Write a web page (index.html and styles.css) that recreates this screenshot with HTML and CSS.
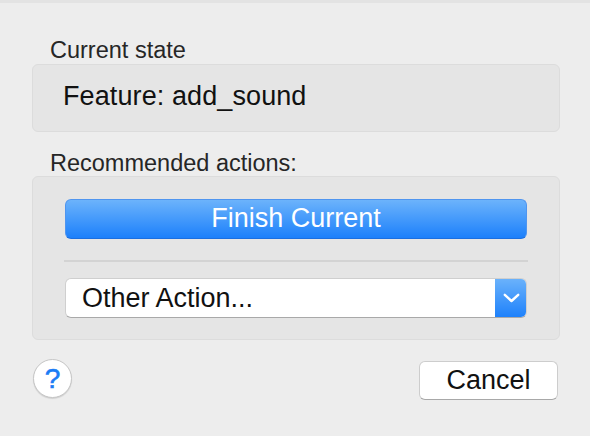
FILE: index.html
```html
<!DOCTYPE html>
<html>
<head>
<meta charset="utf-8">
<link rel="stylesheet" href="styles.css">
</head>
<body>
<div class="dialog">
  <div class="label label-first">Current state</div>
  <div class="group state">
    <div class="state-text">Feature: add_sound</div>
  </div>
  <div class="label">Recommended actions:</div>
  <div class="group actions">
    <div class="primary">Finish Current</div>
    <div class="separator"></div>
    <div class="popup">
      <div class="popup-text">Other Action...</div>
      <div class="popup-arrow">
        <svg width="17" height="10" viewBox="0 0 17 10"><path d="M1.8 1.8 L8.5 8 L15.2 1.8" fill="none" stroke="#fff" stroke-width="2.4" stroke-linecap="round" stroke-linejoin="round"/></svg>
      </div>
    </div>
  </div>
  <div class="footer">
    <div class="help">?</div>
    <div class="cancel">Cancel</div>
  </div>
</div>
</body>
</html>
```

FILE: styles.css
```css
html, body {
  margin: 0;
  padding: 0;
}
body {
  background: #ededed;
  width: 590px;
  height: 436px;
  overflow: hidden;
  font-family: "Liberation Sans", Arial, sans-serif;
  border-top: 3px solid #e3e3e3;
  box-sizing: border-box;
}
.dialog {
  padding: 0 30px 0 32px;
}
.label {
  font-size: 23.5px;
  line-height: 26px;
  color: #262626;
  padding-left: 18px;
  margin-top: 18px;
}
.label-first {
  margin-top: 34px;
  margin-bottom: 1px;
}
.group {
  background: #e5e5e5;
  border: 1px solid #dcdcdc;
  border-radius: 6px;
}
.state {
  padding: 15px 30px 0;
  box-sizing: border-box;
  height: 68px;
}
.state-text {
  font-size: 27px;
  line-height: 32px;
  color: #111;
  letter-spacing: 0.1px;
}
.actions {
  padding: 22px 32px 21px;
  height: 164px;
  box-sizing: border-box;
}
.primary {
  height: 40px;
  box-sizing: border-box;
  border-radius: 6px;
  border: 1px solid #4f95ef;
  border-bottom-color: #1b6fe0;
  background: linear-gradient(#6cb3fb, #1c80fb);
  color: #fff;
  font-size: 27px;
  line-height: 37px;
  text-align: center;
}
.separator {
  height: 2px;
  background: #d3d3d3;
  margin: 21px -1px 16px -1px;
}
.popup {
  display: flex;
  height: 40px;
  box-sizing: border-box;
  border-radius: 6px;
  background: #fff;
  border: 1px solid #cfcfcf;
  border-bottom-color: #a9a9a9;
  overflow: hidden;
}
.popup-text {
  flex: 1;
  font-size: 27px;
  line-height: 38px;
  color: #111;
  padding-left: 16px;
}
.popup-arrow {
  width: 32px;
  background: linear-gradient(#6cb3fb, #1c80fb);
  display: flex;
  align-items: center;
  justify-content: center;
  margin: -1px -1px -1px 0;
}
.footer {
  display: flex;
  justify-content: space-between;
  align-items: flex-start;
  margin-top: 19px;
  padding-right: 2px;
}
.help {
  width: 39px;
  height: 39px;
  box-sizing: border-box;
  border-radius: 50%;
  background: #fff;
  border: 1px solid #c6c6c6;
  box-shadow: 0 1px 1px rgba(0,0,0,0.12);
  color: #1a7cf5;
  font-size: 28px;
  line-height: 37px;
  text-align: center;
  margin-left: 1px;
  -webkit-text-stroke: 0.6px #1a7cf5;
}
.cancel {
  width: 139px;
  height: 39px;
  margin-top: 2px;
  box-sizing: border-box;
  border-radius: 6px;
  background: #fff;
  border: 1px solid #cdcdcd;
  border-bottom-color: #a8a8a8;
  color: #111;
  font-size: 27px;
  line-height: 37px;
  text-align: center;
}
```
